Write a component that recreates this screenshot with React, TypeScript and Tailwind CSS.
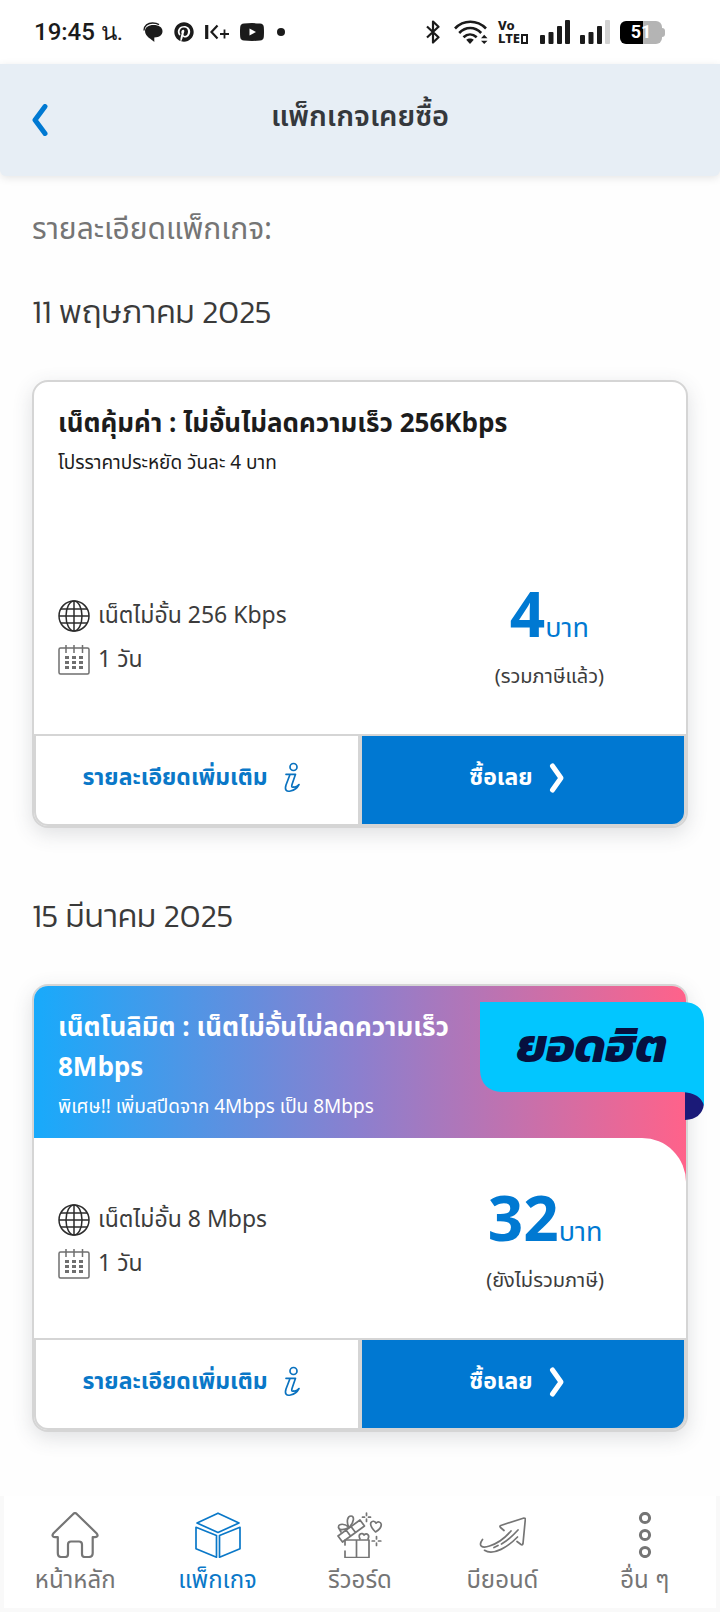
import type { ReactNode } from "react";
import { FaPinterest } from "react-icons/fa";

const Chat = () => (
  <svg className="h-5 w-5" viewBox="0 0 20 20" fill="#1b1b1b">
    <path d="M10.500 3C16 3 19.500 5.500 19.500 9.200c0 3.600-3 6.100-8.200 6.300V20C9 17.500 2 14.500 2 9 2 5.500 5.500 3 10.500 3z" />
    <path d="M1 8.500C1 3.500 5 1 9.500 1c3 0 5 .6 6.500 1.600" fill="none" stroke="#1b1b1b" strokeWidth="1.400" />
  </svg>
);

const KPlus = () => (
  <svg className="h-4 w-6" viewBox="0 0 24 16" fill="none" stroke="#1b1b1b">
    <path d="M1.700 1v14" strokeWidth="3.200" />
    <path d="M12.500 1.500 6.500 8l6 6.500" strokeWidth="2.200" />
    <path d="M15 10h9M19.500 5.500v9" strokeWidth="1.800" />
  </svg>
);

const YouTube = () => (
  <svg className="h-[18px] w-6" viewBox="0 0 24 18">
    <path d="M4 .5Q12-.3 20 .5q3.500.2 3.800 3.500.4 5 0 10-.3 3.300-3.800 3.500-8 .8-16 0Q.5 17.300.2 14q-.4-5 0-10Q.5.700 4 .5z" fill="#1b1b1b" />
    <path d="m9.500 5.500 6.500 3.500-6.500 3.500z" fill="#fff" />
  </svg>
);

const Bluetooth = () => (
  <svg className="h-6 w-[14px]" viewBox="0 0 14 24" fill="none" stroke="#1b1b1b" strokeWidth="2.200" strokeLinejoin="round">
    <path d="m1 6.500 11.500 10.800L7 22.500V1.500l5.500 5.200L1 17.500" />
  </svg>
);

const Wifi = () => (
  <svg className="h-6 w-[34px]" viewBox="0 0 34 24" fill="none" stroke="#1b1b1b" strokeWidth="2.600">
    <path d="M1 8.500C9.500-.5 23-.5 32 8.500M5.200 13c6.500-6.600 15.500-6.600 22 0M9.500 17.300c4-3.800 9-3.800 13.200 0" />
    <path d="m16 24-3.800-4.200c2.200-1.900 5.400-1.900 7.600 0z" fill="#1b1b1b" stroke="none" />
    <path d="m27 18.300 3.200-3.500 3.300 3.500zM27 20.700l3.200 3.300 3.300-3.300z" fill="#1b1b1b" stroke="none" />
  </svg>
);

const Signal = ({ weak = false }: { weak?: boolean }) => (
  <svg className="h-6 w-[30px]" viewBox="0 0 30 24" fill="#1b1b1b">
    <rect x="0" y="15" width="5" height="9" rx="1" />
    <rect x="8.500" y="12" width="5" height="12" rx="1" />
    <rect x="17" y="6" width="5" height="18" rx="1" />
    <rect x="25" y="0" width="5" height="24" rx="1" fill={weak ? "#d2d2d2" : "#1b1b1b"} />
  </svg>
);

const Globe = () => (
  <svg className="h-8 w-8 shrink-0" viewBox="0 0 32 32" fill="none" stroke="#2c2c2c" strokeWidth="1.500">
    <circle cx="16" cy="16" r="15" />
    <ellipse cx="16" cy="16" rx="8" ry="15" />
    <path d="M16 1v30M1 16h30M3 9h26M3 23h26" />
  </svg>
);

const Calendar = () => (
  <svg className="h-8 w-8 shrink-0" viewBox="0 0 32 32" fill="none" stroke="#6f6f6f" strokeWidth="1.500">
    <rect x="1" y="4" width="30" height="26" rx="1.500" />
    <path d="M8 1v8M16 1v8M24.500 1v8" />
    <path d="M7 13.500h4m3 0h4m3 0h4M7 18.500h4m3 0h4m3 0h4M7 23.500h4m3 0h4m3 0h4" strokeWidth="3" />
  </svg>
);

const Info = () => (
  <svg className="h-8 w-6" viewBox="0 0 24 32" fill="none" stroke="#0a72bf" strokeWidth="1.700" strokeLinecap="round" strokeLinejoin="round">
    <circle cx="13.500" cy="5" r="3.500" />
    <path d="M6 12.300h9.500L12 22.500q-1 3.500 1.500 2.500M10 12.500 6 23c-1.600 5 .5 7 4.500 6 4.500-1 7-3.500 8.500-6.500-2 2-3.500 3-5.500 2.500" />
  </svg>
);

const Chevron = () => (
  <svg className="h-8 w-6" viewBox="0 0 24 32" fill="none" stroke="#fff" strokeWidth="5" strokeLinecap="round" strokeLinejoin="round">
    <path d="m7.500 4 8.500 12-8.500 12" />
  </svg>
);

const iconProps = {
  className: "h-[46px] w-12",
  viewBox: "0 0 48 46",
  fill: "none",
  stroke: "currentColor",
  strokeLinecap: "round",
  strokeLinejoin: "round",
} as const;

const Home = () => (
  <svg {...iconProps} strokeWidth="2.200">
    <path d="M22.500 1.700q1.500-1.200 3 0l20 19.500c2 2.300 1 4-1.500 4h-2.300V41q0 4-4 4h-4q-2.700 0-2.700-3V32.500q0-3-3-3h-8q-3 0-3 3V42q0 3-2.700 3h-4q-3.500 0-3.500-4V25.200H4c-2.500 0-3.300-2-1.500-4z" />
  </svg>
);

const Box = () => (
  <svg {...iconProps} strokeWidth="1.700">
    <path d="m24 1.200 21 9.800-21 9.500L3 11zM2 15.300l20.500 8.200v21.700L2 36.700zM46 15.300l-20.500 8.200v21.700L46 36.700z" />
  </svg>
);

const Gift = () => (
  <svg {...iconProps} strokeWidth="1.700">
    <path d="m2 24 22-16 4.500 6-22 16zM10 18l4.500 6M15 14.500l4.500 6" />
    <path d="M13 15.500C10 9.500 11.500 4 15 4s3.500 6-2 11.500zM13 15.500C9 11 2.500 11.500 2.500 15s5 3.500 10.500.5zM2.500 15.500 5 20" />
    <path d="M9 33v-5h24v17.500H9V39M20.500 28v17.500" />
    <path d="M24 27c-2.500-5 2-7 4-4 3-2.500 6 0 4 4" />
    <path d="M39.500 20c-3-3-6-6.500-4.500-9.500 1.300-2 4-1.500 5 .7 1.800-2 4.700-1.500 5.200 1 .5 3.500-2.700 6-5.700 7.800z" />
    <path d="M30.500 1v2.500M30.500 7v2.500M26.500 5.200h2M32.500 5.200h2M40.500 24.500V27M40.500 31v2.500M36.200 29h2.300M42.500 29h2.300" />
  </svg>
);

const Arrow = () => (
  <svg {...iconProps} strokeWidth="1.700">
    <path d="M26 18.500 22.500 15.500q-1.500-1.500 1-2.300L46 6q1.500 0 1.300 1.500L45 31.500q-.5 2-2 1L39 29.500" />
    <path d="M4.500 27.500c-5 7 0 9 7 6.500 8-2.500 15-7.500 21.500-15M6.500 38.300c9 6 24-4 33-13.300M16 35.500l4-2M23.500 32C30 28.500 35 23.500 40 18" />
  </svg>
);

const Dots = () => (
  <svg {...iconProps} strokeWidth="3">
    <circle cx="24" cy="6" r="4.600" />
    <circle cx="24" cy="23" r="4.600" />
    <circle cx="24" cy="40" r="4.600" />
  </svg>
);

const tabs: { label: string; icon: ReactNode; active?: boolean }[] = [
  { label: "หน้าหลัก", icon: <Home /> },
  { label: "แพ็กเกจ", icon: <Box />, active: true },
  { label: "รีวอร์ด", icon: <Gift /> },
  { label: "บียอนด์", icon: <Arrow /> },
  { label: "อื่น ๆ", icon: <Dots /> },
];

type Plan = {
  date: string;
  title: string;
  note: string;
  speed: string;
  days: string;
  price: string;
  tax: string;
  badge?: string;
};

const plans: Plan[] = [
  {
    date: "11 พฤษภาคม 2025",
    title: "เน็ตคุ้มค่า : ไม่อั้นไม่ลดความเร็ว 256Kbps",
    note: "โปรราคาประหยัด วันละ 4 บาท",
    speed: "เน็ตไม่อั้น 256 Kbps",
    days: "1 วัน",
    price: "4",
    tax: "(รวมภาษีแล้ว)",
  },
  {
    date: "15 มีนาคม 2025",
    title: "เน็ตโนลิมิต : เน็ตไม่อั้นไม่ลดความเร็ว 8Mbps",
    note: "พิเศษ!! เพิ่มสปีดจาก 4Mbps เป็น 8Mbps",
    speed: "เน็ตไม่อั้น 8 Mbps",
    days: "1 วัน",
    price: "32",
    tax: "(ยังไม่รวมภาษี)",
    badge: "ยอดฮิต",
  },
];

function Ribbon({ text }: { text: string }) {
  return (
    <div className="absolute top-4 -right-[18px] w-56">
      <svg className="block h-[118px] w-56" viewBox="0 0 224 118">
        <path d="M205 88h19v14q-2 15-19 16z" fill="#1b1a78" />
        <path d="M0 0h204q20 1 20 20v84q-3-13-22-14H22Q1 89 0 68z" fill="#02c6ff" />
      </svg>
      <span className="absolute inset-x-0 top-0 text-center font-[Kanit,'Noto_Sans_Thai','Noto_Sans',sans-serif] text-[47px] leading-[88px] font-bold text-[#06103f] italic">
        {text}
      </span>
    </div>
  );
}

function PlanCard({ plan }: { plan: Plan }) {
  const hot = Boolean(plan.badge);
  return (
    <article className="relative rounded-2xl border-2 border-[#d5d5d5] bg-white shadow-[0_6px_20px_rgba(60,70,80,0.16)]">
      <div className={hot ? "rounded-t-[14px] bg-linear-to-r/srgb from-[#18aafb] via-[#8c7fce] to-[#ff628a]" : "rounded-t-[14px]"}>
        <header className={hot ? "min-h-38 pt-[22px] pr-56 pb-2 pl-6 text-white" : "min-h-38 px-6 pt-[22px] pb-2 text-[#1c1c1c]"}>
          <h3 className="text-[26px] leading-10 font-bold">{plan.title}</h3>
          <p className="text-[19px] leading-10">{plan.note}</p>
        </header>
        <div className="flex min-h-50 items-start justify-between rounded-tr-[44px] bg-white pr-[82px] pl-6">
          <ul className="pt-15 text-[23px] text-[#3c3c3c]">
            <li className="flex h-11 items-center gap-2">
              <Globe />
              {plan.speed}
            </li>
            <li className="flex h-11 items-center gap-2">
              <Calendar />
              {plan.days}
            </li>
          </ul>
          <div className="pt-12 text-center">
            <p className="flex items-baseline justify-center leading-[72px] text-[#0079d2]">
              <strong className="text-[62px] font-bold">{plan.price}</strong>
              <span className="text-[27px]">บาท</span>
            </p>
            <p className="text-xl leading-6 text-[#3c3c3c]">{plan.tax}</p>
          </div>
        </div>
      </div>
      <div className="grid grid-cols-2">
        <button className="flex h-[92px] items-center justify-center gap-3 rounded-bl-[14px] border-2 border-[#d5d5d5] bg-white pr-2 pb-1 text-[23px] font-bold text-[#0a78c8]">
          รายละเอียดเพิ่มเติม
          <Info />
        </button>
        <button className="flex h-[92px] items-center justify-center gap-3 rounded-br-[14px] border-2 border-[#d5d5d5] bg-[#0078d2] pr-2 pb-1 text-[23px] font-bold text-white">
          ซื้อเลย
          <Chevron />
        </button>
      </div>
      {plan.badge && <Ribbon text={plan.badge} />}
    </article>
  );
}

export default function App() {
  return (
    <div className="bg-[#fefefe] font-['Noto_Sans_Thai','Noto_Sans',sans-serif]">
      <div className="flex h-16 items-center justify-between bg-white pr-[55px] pl-[34px] text-[#1b1b1b]">
        <div className="flex items-center">
          <span className="mr-5 font-[Roboto,'Noto_Sans',sans-serif] text-2xl font-medium whitespace-nowrap">
            19:45 <span className="font-normal">น.</span>
          </span>
          <div className="flex items-center gap-[11px]">
            <Chat />
            <FaPinterest className="h-5 w-5" />
            <KPlus />
            <YouTube />
            <span className="ml-[2px] h-2 w-2 rounded-full bg-[#1b1b1b]" />
          </div>
        </div>
        <div className="flex items-center gap-[10px]">
          <div className="flex items-center gap-[14px]">
            <Bluetooth />
            <Wifi />
          </div>
          <div className="w-8 font-['Noto_Sans',sans-serif] text-[13px] leading-[13px] font-extrabold">
            <div>Vo</div>
            <div className="flex items-center">
              LTE
              <span className="ml-px h-[10px] w-[7px] shrink-0 border-2 border-[#1b1b1b]" />
            </div>
          </div>
          <Signal />
          <Signal weak />
          <div className="flex items-center">
            <div className="flex h-[23px] w-[42px] items-center justify-center rounded-[6px] bg-linear-to-r from-black from-55% to-[#b4b4b4] to-55% font-[Roboto,sans-serif] text-lg font-bold text-white">
              51
            </div>
            <span className="h-[9px] w-[3px] rounded-r bg-[#b4b4b4]" />
          </div>
        </div>
      </div>

      <header className="grid h-28 grid-cols-[48px_1fr_48px] items-center rounded-b-md bg-[#e7eef5] px-4 pb-[6px] shadow-[0_2px_8px_rgba(0,0,0,0.1)]">
        <button aria-label="ย้อนกลับ" className="flex h-12 items-center justify-center pt-[6px]">
          <svg className="h-8 w-4" viewBox="0 0 16 32" fill="none" stroke="#0079d2" strokeWidth="5" strokeLinecap="round" strokeLinejoin="round">
            <path d="M13 2.500 3 16l10 13.500" />
          </svg>
        </button>
        <h1 className="text-center text-[29px] leading-10 font-semibold text-[#35383c]">แพ็กเกจเคยซื้อ</h1>
      </header>

      <main className="px-8 pt-[34px] pb-16">
        <h2 className="text-[30px] leading-10 text-[#757575]">รายละเอียดแพ็กเกจ:</h2>
        <div className="flex flex-col gap-[66px] pt-10">
          {plans.map((plan) => (
            <section key={plan.date}>
              <h3 className="mb-[46px] font-[Kanit,'Noto_Sans_Thai','Noto_Sans',sans-serif] text-[32px] leading-11 font-light text-[#3a3a3a]">
                {plan.date}
              </h3>
              <PlanCard plan={plan} />
            </section>
          ))}
        </div>
      </main>

      <nav className="bg-[#f9f9f9] px-1 pb-1">
        <ul className="grid grid-cols-5 bg-white">
          {tabs.map((tab) => (
            <li key={tab.label}>
              <a
                href="#"
                className={
                  tab.active
                    ? "flex flex-col items-center gap-[6px] pt-4 pb-[10px] text-[#0a78c8]"
                    : "flex flex-col items-center gap-[6px] pt-4 pb-[10px] text-[#757575]"
                }
              >
                {tab.icon}
                <span className="text-2xl leading-[34px]">{tab.label}</span>
              </a>
            </li>
          ))}
        </ul>
      </nav>
    </div>
  );
}
